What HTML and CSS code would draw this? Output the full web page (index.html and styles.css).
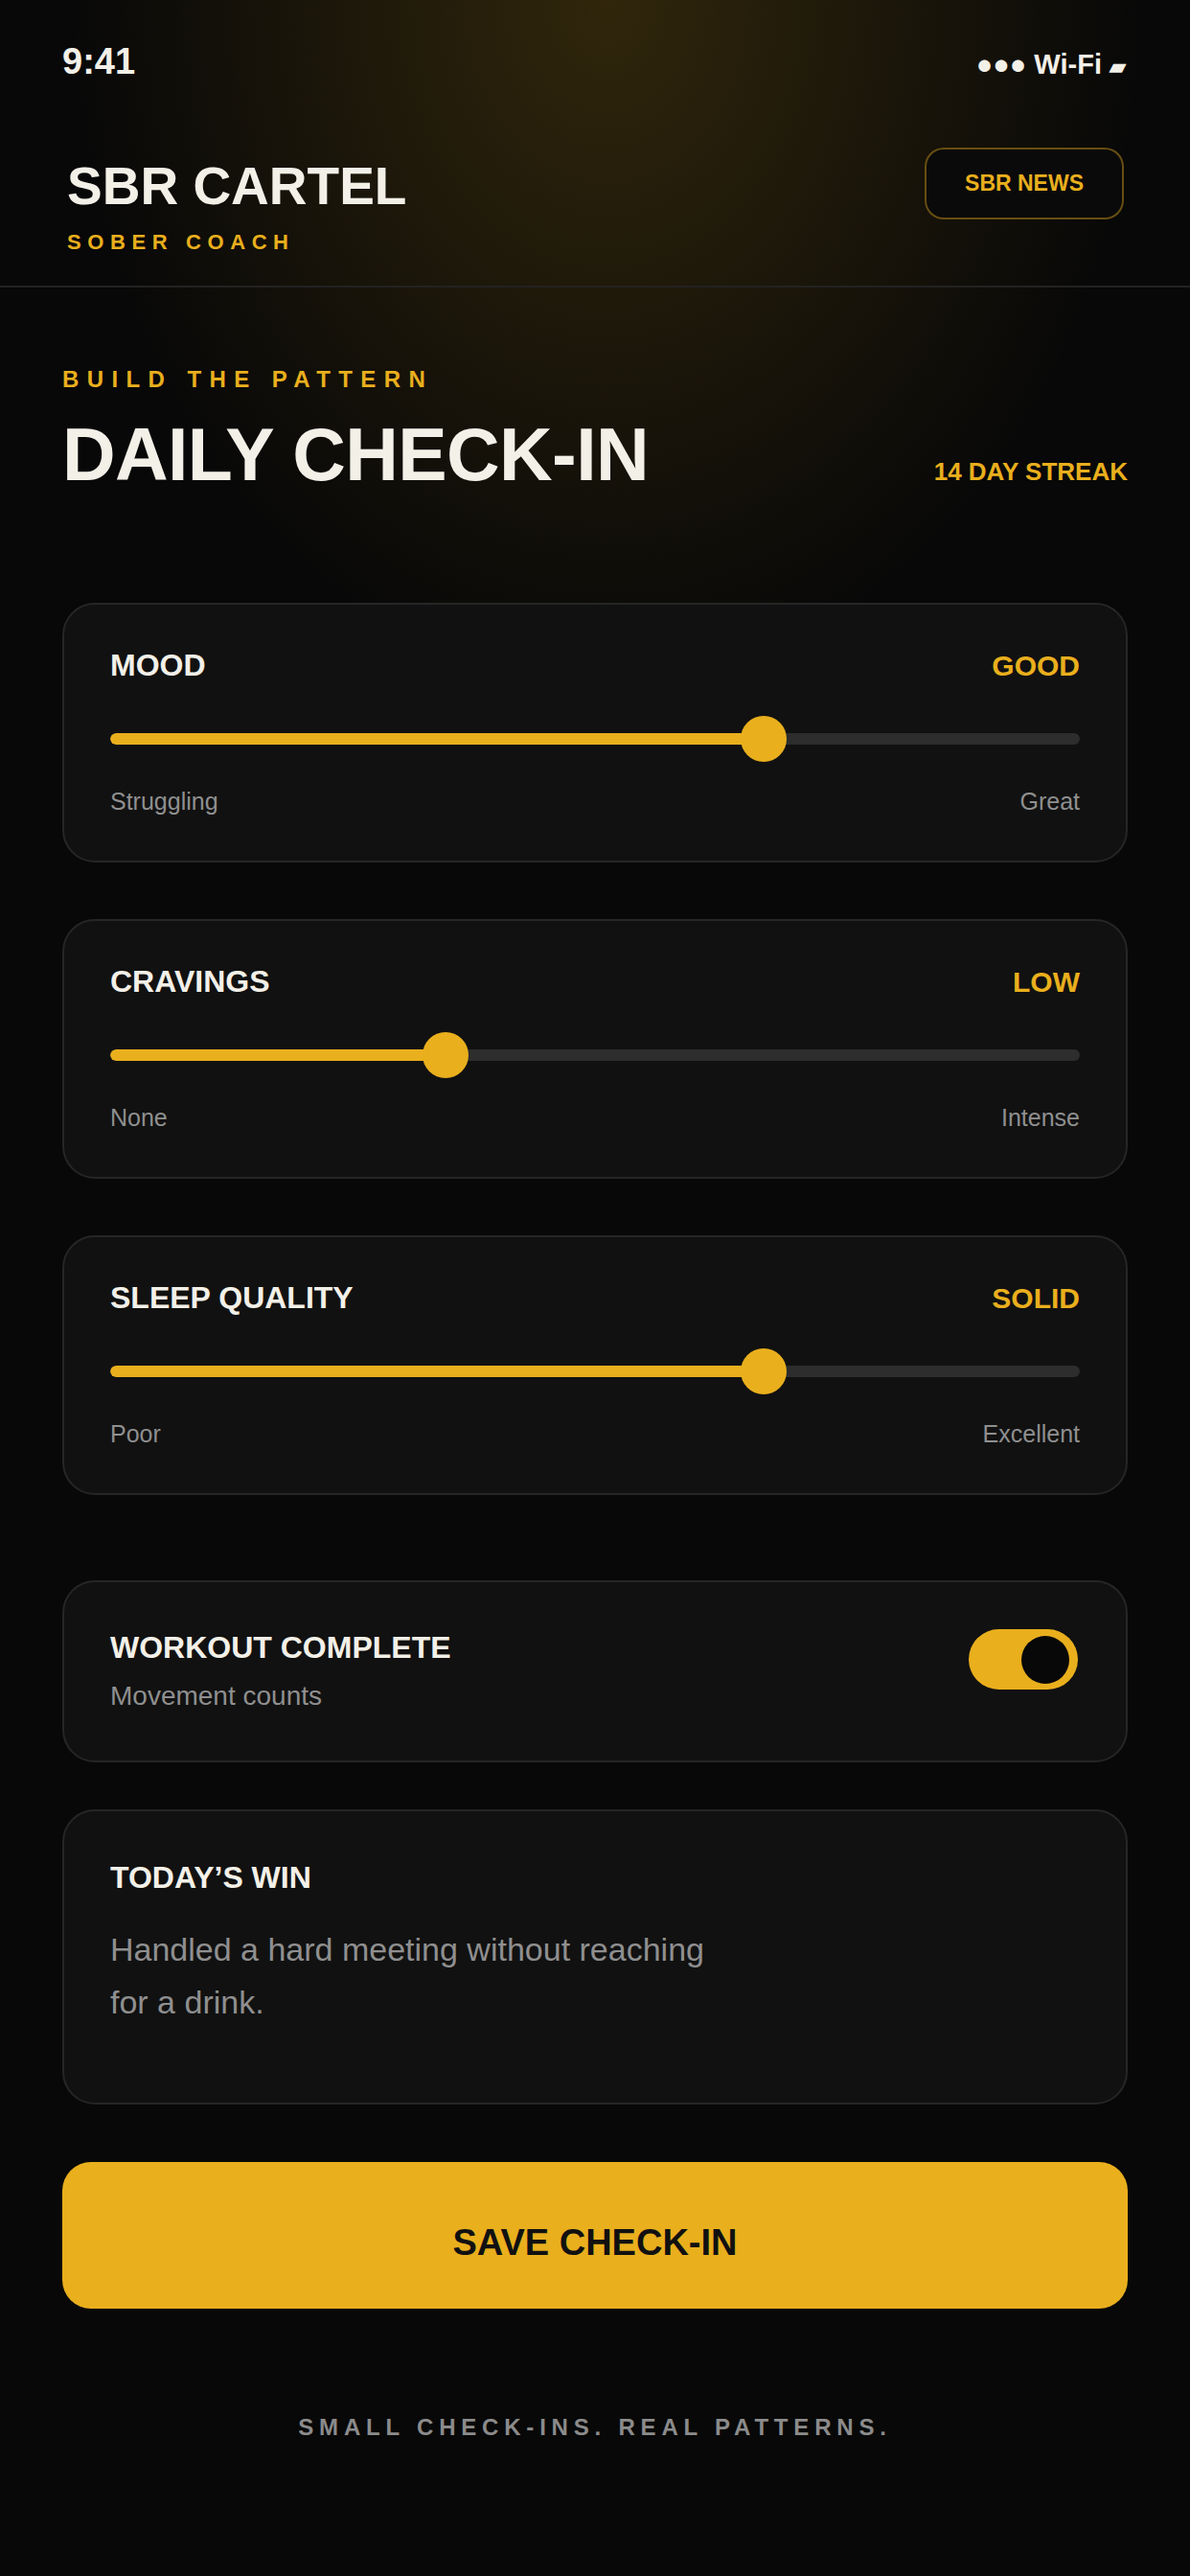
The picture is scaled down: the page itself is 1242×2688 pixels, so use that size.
FILE: index.html
```html
<html lang="en">
<head>
<meta charset="UTF-8">
<meta name="viewport" content="width=device-width, initial-scale=1.0">
<title>Daily Check-In</title>
<link rel="stylesheet" href="styles.css">
</head>
<body>
<div class="screen">
  <div class="status-bar">
    <span class="time">9:41</span>
    <span class="signal">●●● Wi-Fi <span class="battery">▰</span></span>
  </div>

  <header class="top-header">
    <div class="brand">
      <h1>SBR CARTEL</h1>
      <p>SOBER COACH</p>
    </div>
    <a class="news-btn" href="#">SBR NEWS</a>
  </header>

  <main class="content">
    <p class="eyebrow">BUILD THE PATTERN</p>
    <div class="title-row">
      <h2>DAILY CHECK-IN</h2>
      <span class="streak">14 DAY STREAK</span>
    </div>

    <div class="card slider-card first">
      <div class="card-head">
        <span class="card-label">MOOD</span>
        <span class="card-value">GOOD</span>
      </div>
      <div class="slider">
        <div class="track"><div class="fill" style="width: 67.4%"></div></div>
        <div class="thumb" style="left: 67.4%"></div>
      </div>
      <div class="range-labels">
        <span>Struggling</span>
        <span>Great</span>
      </div>
    </div>

    <div class="card slider-card">
      <div class="card-head">
        <span class="card-label">CRAVINGS</span>
        <span class="card-value">LOW</span>
      </div>
      <div class="slider">
        <div class="track"><div class="fill" style="width: 34.6%"></div></div>
        <div class="thumb" style="left: 34.6%"></div>
      </div>
      <div class="range-labels">
        <span>None</span>
        <span>Intense</span>
      </div>
    </div>

    <div class="card slider-card">
      <div class="card-head">
        <span class="card-label">SLEEP QUALITY</span>
        <span class="card-value">SOLID</span>
      </div>
      <div class="slider">
        <div class="track"><div class="fill" style="width: 67.4%"></div></div>
        <div class="thumb" style="left: 67.4%"></div>
      </div>
      <div class="range-labels">
        <span>Poor</span>
        <span>Excellent</span>
      </div>
    </div>

    <div class="card toggle-card">
      <div class="toggle-text">
        <span class="card-label">WORKOUT COMPLETE</span>
        <p>Movement counts</p>
      </div>
      <div class="toggle on"><span class="knob"></span></div>
    </div>

    <div class="card win-card">
      <span class="card-label">TODAY’S WIN</span>
      <p>Handled a hard meeting without reaching for a drink.</p>
    </div>

    <button class="save-btn" type="button">SAVE CHECK-IN</button>

    <p class="footer-note">SMALL CHECK-INS. REAL PATTERNS.</p>
  </main>
</div>
</body>
</html>
```

FILE: styles.css
```css
body {
  margin: 0;
  padding: 0;
  background-color: #080808;
  color: #f3f0e8;
  font-family: "Liberation Sans", Arial, sans-serif;
}

.screen {
  min-height: 2688px;
  background: radial-gradient(ellipse 560px 720px at 51% 0, rgba(233, 175, 29, 0.18), rgba(233, 175, 29, 0) 100%), #080808;
}

/* status bar */
.status-bar {
  display: flex;
  justify-content: space-between;
  align-items: baseline;
  padding: 43px 67px 0 65px;
  height: 43px;
}

.status-bar .time {
  font-size: 38px;
  font-weight: bold;
  line-height: 43px;
}

.status-bar .signal {
  font-size: 29px;
  font-weight: bold;
}

.status-bar .battery {
  font-size: 22px;
}

/* header */
.top-header {
  display: flex;
  justify-content: space-between;
  align-items: flex-start;
  padding: 68px 69px 32px 70px;
  border-bottom: 2px solid #222;
}

.brand {
  padding-top: 10px;
}

.brand h1 {
  margin: 0;
  font-size: 55px;
  line-height: 60px;
  font-weight: bold;
}

.brand p {
  margin: 16px 0 0;
  font-size: 22px;
  line-height: 26px;
  font-weight: bold;
  letter-spacing: 6.6px;
  color: #e9af1d;
}

.news-btn {
  display: flex;
  align-items: center;
  height: 71px;
  padding: 0 40px;
  border: 2px solid rgba(233, 175, 29, 0.42);
  border-radius: 20px;
  background-color: #0a0a0a;
  color: #e9af1d;
  font-size: 23px;
  font-weight: bold;
  text-decoration: none;
}

/* main */
.content {
  padding: 0 65px;
}

.eyebrow {
  margin: 82px 0 0;
  font-size: 24px;
  line-height: 28px;
  font-weight: bold;
  letter-spacing: 8.4px;
  color: #e9af1d;
}

.title-row {
  display: flex;
  justify-content: space-between;
  align-items: baseline;
  margin-top: 26px;
}

.title-row h2 {
  margin: 0;
  font-size: 77px;
  line-height: 77px;
  font-weight: bold;
  letter-spacing: -0.6px;
}

.streak {
  font-size: 26px;
  font-weight: bold;
  color: #e9af1d;
}

.card {
  background-color: #111;
  border: 2px solid #262626;
  border-radius: 34px;
}

.card-label {
  font-size: 32px;
  line-height: 38px;
  font-weight: bold;
  color: #f3f0e8;
}

.slider-card {
  padding: 44px 48px 47px;
  margin-top: 59px;
}

.slider-card.first {
  margin-top: 116px;
}

.card-head {
  display: flex;
  justify-content: space-between;
  align-items: baseline;
  height: 38px;
}

.card-value {
  font-size: 30px;
  font-weight: bold;
  color: #e9af1d;
}

.slider {
  position: relative;
  display: flex;
  align-items: center;
  height: 48px;
  margin: 34px 0 26px;
}

.track {
  flex: 1;
  height: 12px;
  border-radius: 6px;
  background-color: #2d2d2d;
  overflow: hidden;
}

.fill {
  height: 100%;
  border-radius: 6px;
  background-color: #e9af1d;
}

.thumb {
  position: absolute;
  top: 0;
  width: 48px;
  height: 48px;
  border-radius: 50%;
  background-color: #e9af1d;
  transform: translateX(-50%);
}

.range-labels {
  display: flex;
  justify-content: space-between;
  font-size: 25px;
  line-height: 30px;
  color: #8f8f8f;
}

/* workout toggle */
.toggle-card {
  display: flex;
  justify-content: space-between;
  align-items: flex-start;
  padding: 49px 50px 50px 48px;
  margin-top: 89px;
}

.toggle-text .card-label {
  display: block;
}

.toggle-text p {
  margin: 15px 0 0;
  font-size: 28px;
  line-height: 34px;
  color: #8f8f8f;
}

.toggle {
  display: flex;
  align-items: center;
  box-sizing: border-box;
  width: 114px;
  height: 63px;
  padding: 0 9px;
  border-radius: 32px;
  background-color: #333;
}

.toggle.on {
  justify-content: flex-end;
  background-color: #e9af1d;
}

.knob {
  width: 50px;
  height: 50px;
  border-radius: 50%;
  background-color: #080808;
}

/* today's win */
.win-card {
  padding: 50px 48px 77px;
  margin-top: 49px;
}

.win-card .card-label {
  display: block;
}

.win-card p {
  max-width: 640px;
  margin: 29px 0 0;
  font-size: 34px;
  line-height: 55px;
  color: #8f8f8f;
}

.save-btn {
  display: block;
  width: 100%;
  height: 153px;
  margin-top: 60px;
  padding: 15px 0 0;
  border: none;
  border-radius: 30px;
  background-color: #e9af1d;
  color: #111;
  font-family: "Liberation Sans", Arial, sans-serif;
  font-size: 38px;
  font-weight: bold;
  cursor: pointer;
}

.footer-note {
  margin: 110px 0 0;
  text-align: center;
  font-size: 24px;
  line-height: 28px;
  font-weight: bold;
  letter-spacing: 5.8px;
  color: #8b8b8b;
}
```
